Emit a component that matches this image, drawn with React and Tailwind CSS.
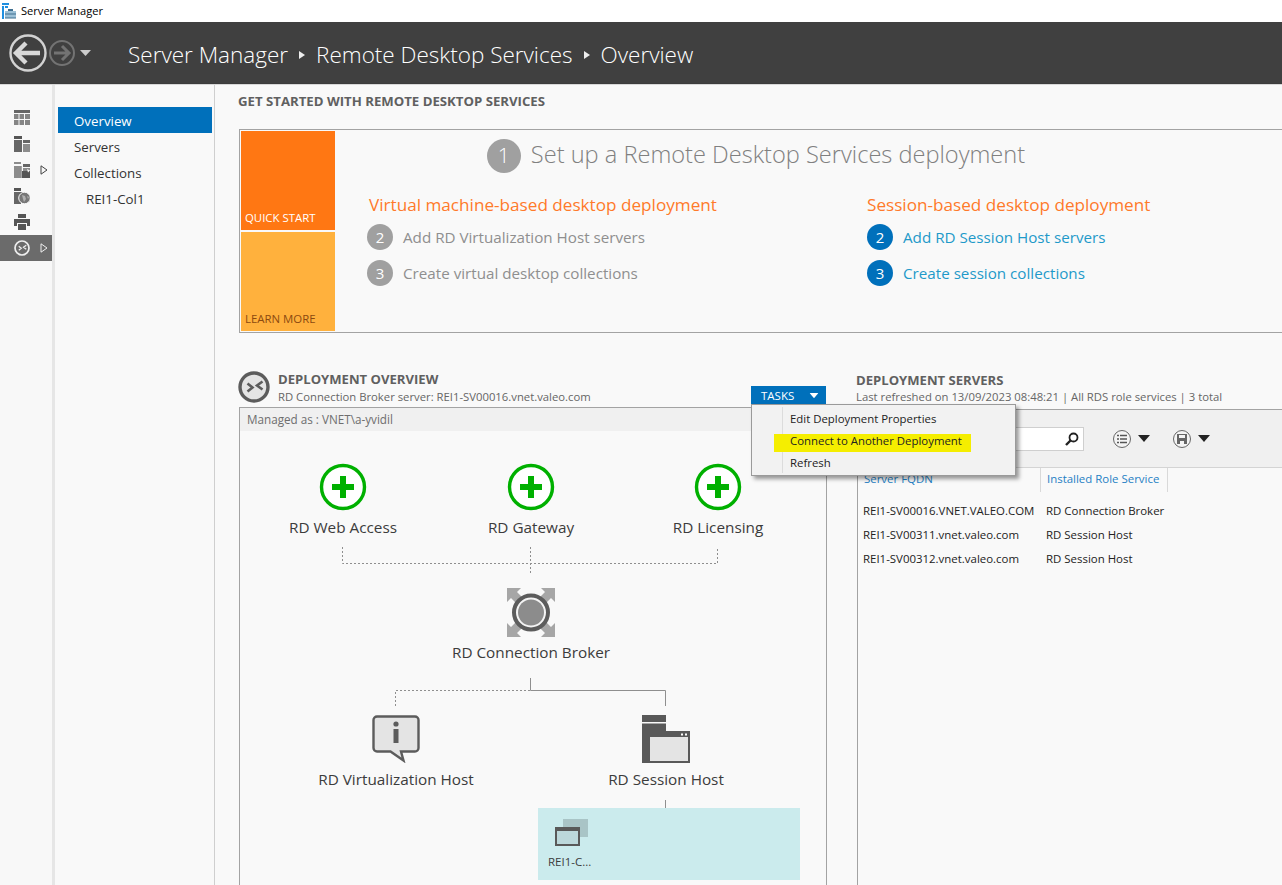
import React from "react";

const font = "[font-family:'Open_Sans','Noto_Sans',sans-serif]";

const Caret = ({ className = "" }) => (
  <svg width="12" height="7" viewBox="0 0 12 7" className={className}>
    <path d="M0 0h12L6 7z" fill="currentColor" />
  </svg>
);

const RailArrow = ({ light }) => (
  <svg width="8" height="10" viewBox="0 0 8 10" className="absolute left-[40px] top-[8px]">
    <path d="M1 .8 7 5 1 9.2z" fill="none" stroke={light ? "#eeeeee" : "#444444"} strokeWidth="1" />
  </svg>
);

const RailIcons = [
  <g key="a">
    <path d="M0 0h16v3H0z" fill="#666666" />
    <path d="M0 4h4.500v5H0zM5.500 4h4.500v5H5.500zM11 4h5v5h-5zM0 10h4.500v5H0zM5.500 10h4.500v5H5.500zM11 10h5v5h-5z" fill="#858585" />
  </g>,
  <g key="b">
    <path d="M0 0h8v3H0z" fill="#555555" />
    <path d="M0 4h8v12H0z" fill="#666666" />
    <path d="M9 4h7v3H9z" fill="#666666" />
    <path d="M9 8h7v8H9z" fill="#8c8c8c" />
  </g>,
  <g key="c">
    <path d="M0 0h7v2H0zM0 4h7v12H0z" fill="#8c8c8c" />
    <path d="M7 4h1v12H7z" fill="#a5a5a5" />
    <path d="M9 2h7v3H9z" fill="#666666" />
    <path d="M8 9h8v7H8z" fill="#555555" />
    <path d="M9 6h7v3H9z" fill="#8c8c8c" />
    <path d="M13 7l3 1.500-2 2z" fill="#f8f8f8" />
  </g>,
  <g key="d">
    <path d="M0 0h7v3H0z" fill="#555555" />
    <path d="M0 4h7v12H0zM7 4h3v2H7z" fill="#666666" />
    <circle cx="10.500" cy="10" r="5.800" fill="#777777" stroke="#f8f8f8" />
    <path d="M8 7l3 1 1 3-2 3-1-3zM13 8l2 1-1 2z" fill="#b0b0b0" />
  </g>,
  <path key="e" d="M4 0h8v4H4zM0 5h16v7h-3V9H3v3H0zM4 10h8v6H4z" fill="#555555" />,
];

const BrokerGlyph = ({ size, ring, bg, line }) => (
  <svg width={size} height={size} viewBox="0 0 32 32">
    <circle cx="16" cy="16" r="14" fill={bg} stroke={ring} strokeWidth="3.400" />
    <path d="M9.500 12.500l5 4-5 4M24.500 10.500l-5.500 4 5.500 4" fill="none" stroke={line} strokeWidth="2.600" />
  </svg>
);

const Plus = () => (
  <svg width="48" height="48" viewBox="0 0 48 48">
    <circle cx="24" cy="24" r="21.500" fill="#ffffff" stroke="#00b000" strokeWidth="3.400" />
    <path d="M21 13h6v8h8v6h-8v8h-6v-8h-8v-6h8z" fill="#00b000" />
  </svg>
);

const Step = ({ n, text, blue }) => (
  <div className="flex items-center h-[36px]">
    <div className={`w-[26px] h-[26px] rounded-full flex items-center justify-center text-white text-[15px] ${blue ? "bg-[#0070bb]" : "bg-[#a0a0a0]"}`}>{n}</div>
    <span className={`ml-[10px] text-[15.200px] ${blue ? "text-[#1f9ac9]" : "text-[#8f8f8f]"}`}>{text}</span>
  </div>
);

const Node = ({ x, y, label, gap = 6, children }) => (
  <div className="absolute w-[200px] flex flex-col items-center" style={{ left: x - 100, top: y }}>
    <div className="h-[48px]">{children}</div>
    <div className="text-[15.300px] leading-[20px] text-[#3c3c3c] whitespace-nowrap" style={{ marginTop: gap }}>{label}</div>
  </div>
);

const rows = [
  ["REI1-SV00016.VNET.VALEO.COM", "RD Connection Broker"],
  ["REI1-SV00311.vnet.valeo.com", "RD Session Host"],
  ["REI1-SV00312.vnet.valeo.com", "RD Session Host"],
];

export default function App() {
  return (
    <div className={`w-[1282px] h-[885px] overflow-hidden flex flex-col bg-[#f9f9f9] ${font}`}>
      {/* window title */}
      <div className="h-[22px] bg-white flex items-center pl-[2px] shrink-0">
        <svg width="14" height="16" viewBox="0 0 14 16">
          <path d="M0 0h7v2H0zM0 3h2v13H0zM3 3h3v2H3z" fill="#1f8fe0" />
          <path d="M3 8h11v7H3z" fill="#9cc0d6" />
          <path d="M6 6h5v2H6zM3 10.500h11v1H3zM3 14.500h11v1H3z" fill="#3f6f90" />
        </svg>
        <span className="ml-[5px] text-[11.100px] text-black">Server Manager</span>
      </div>

      {/* breadcrumb bar */}
      <div className="h-[62px] bg-[#404040] flex items-center shrink-0 border-b border-[#3c3c3c]">
        <svg width="100" height="44" viewBox="0 0 100 44" className="ml-[8px]">
          <circle cx="20" cy="22" r="17.500" fill="none" stroke="#d2d2d2" strokeWidth="2.400" />
          <path d="M8 22h24M18 12 8 22l10 10" fill="none" stroke="#d8d8d8" strokeWidth="4.400" />
          <circle cx="54" cy="22" r="12" fill="none" stroke="#737373" strokeWidth="2" />
          <path d="M46 22h15M54 15l7 7-7 7" fill="none" stroke="#737373" strokeWidth="3" />
          <path d="M72 19h11l-5.500 6z" fill="#cccccc" />
        </svg>
        <div className="ml-[20px] pt-[5px] flex items-center text-white font-light text-[22.500px] leading-[30px] whitespace-nowrap">
          <span>Server Manager</span>
          <svg width="6" height="8" viewBox="0 0 6 8" className="mx-[11px]"><path d="M0 0l6 4-6 4z" fill="#eeeeee" /></svg>
          <span>Remote Desktop Services</span>
          <svg width="6" height="8" viewBox="0 0 6 8" className="mx-[11px]"><path d="M0 0l6 4-6 4z" fill="#eeeeee" /></svg>
          <span>Overview</span>
        </div>
      </div>

      <div className="flex flex-1 min-h-0 border-t border-[#d8d8d8]">
        {/* icon rail */}
        <div className="w-[52px] shrink-0 bg-[#f8f8f8] pt-[20px] flex flex-col">
          {RailIcons.map((icon, i) => (
            <div key={i} className="relative h-[26px] flex items-center pl-[14px]">
              <svg width="16" height="16" viewBox="0 0 16 16">{icon}</svg>
              {i === 2 && <RailArrow />}
            </div>
          ))}
          <div className="relative h-[26px] flex items-center pl-[14px] bg-[#6b6b6b]">
            <BrokerGlyph size={16} ring="#eeeeee" bg="#6b6b6b" line="#eeeeee" />
            <RailArrow light />
          </div>
        </div>
        <div className="w-[3px] shrink-0 bg-[#e6e6e6]" />

        {/* nav */}
        <div className="w-[160px] shrink-0 bg-[#f9f9f9] border-r border-[#cfcfcf] pt-[22px] pl-[3px] pr-[2px] text-[13.300px] text-[#333333]">
          <div className="h-[26px] pt-[4px] bg-[#0070bb] text-white flex items-center pl-[16px]">Overview</div>
          <div className="h-[26px] pt-[4px] flex items-center pl-[16px]">Servers</div>
          <div className="h-[26px] pt-[4px] flex items-center pl-[16px]">Collections</div>
          <div className="h-[26px] pt-[4px] flex items-center pl-[28px]">REI1-Col1</div>
        </div>

        {/* main */}
        <div className="flex-1 min-w-0 pl-[23px]">
          <div className="h-[44px] pt-[7px] text-[13.200px] leading-[18px] font-bold text-[#606060] whitespace-nowrap">GET STARTED WITH REMOTE DESKTOP SERVICES</div>

          <div className="ml-[1px] w-[1100px] h-[204px] border border-[#a3a3a3] flex p-px">
            <div className="w-[94px] flex flex-col gap-[2px] text-[11.400px]">
              <div className="flex-1 bg-[#ff7713] text-white flex items-end pl-[4px] pb-[4px]">QUICK START</div>
              <div className="flex-1 bg-[#ffb13d] text-[#8c4a10] flex items-end pl-[4px] pb-[4px]">LEARN MORE</div>
            </div>
            <div className="w-[842px]">
              <div className="flex justify-center items-center h-[46px] mt-[1px]">
                <div className="w-[34px] h-[34px] mt-[1px] rounded-full bg-[#a0a0a0] text-white flex items-center justify-center text-[21px] font-light">1</div>
                <span className="ml-[10px] text-[23.600px] font-light text-[#808080] whitespace-nowrap">Set up a Remote Desktop Services deployment</span>
              </div>
              <div className="flex mt-[15px] whitespace-nowrap">
                <div className="w-[532px] pl-[32px]">
                  <div className="pl-[2px] text-[17.150px] leading-[24px] text-[#ff7a2a]">Virtual machine-based desktop deployment</div>
                  <div className="mt-[2px]">
                    <Step n="2" text="Add RD Virtualization Host servers" />
                    <Step n="3" text="Create virtual desktop collections" />
                  </div>
                </div>
                <div>
                  <div className="text-[17.150px] leading-[24px] text-[#ff7a2a]">Session-based desktop deployment</div>
                  <div className="mt-[2px]">
                    <Step n="2" text="Add RD Session Host servers" blue />
                    <Step n="3" text="Create session collections" blue />
                  </div>
                </div>
              </div>
            </div>
          </div>

          {/* lower row */}
          <div className="relative flex mt-[37px] ml-[1px] w-[1100px]">
            <div className="w-[588px] shrink-0">
              <div className="h-[37px] flex items-start relative">
                <div className="mt-[1px] -ml-[1px]"><BrokerGlyph size={32} ring="#5c5c5c" bg="#e4e4e4" line="#5c5c5c" /></div>
                <div className="ml-[8px]">
                  <div className="mt-[1px] text-[13.100px] leading-[16px] font-bold text-[#606060]">DEPLOYMENT OVERVIEW</div>
                  <div className="mt-[2px] text-[11.300px] leading-[16px] text-[#666666]">RD Connection Broker server: REI1-SV00016.vnet.valeo.com</div>
                </div>
                <div className="absolute left-[512px] top-[16px] w-[75px] h-[19px] bg-[#0070bb] text-white text-[11.500px] flex items-center pl-[10px]">
                  TASKS
                  <Caret className="ml-[14px] scale-75" />
                </div>
              </div>

              <div className="relative h-[500px] border border-[#a3a3a3] bg-[#f9f9f9]">
                <div className="h-[23px] bg-[#f0f0f0] text-[11.700px] text-[#6e6e6e] flex items-center pl-[7px]">{"Managed as : VNET\\a-yvidil"}</div>

                {/* connectors */}
                <svg width="586" height="480" className="absolute left-0 top-0" fill="none">
                  <g stroke="#8f8f8f" strokeDasharray="2 2">
                    <path d="M102.500 139V155.500H477.500V139" />
                    <path d="M290.500 139V167" />
                    <path d="M155.500 298V282.500H290" />
                  </g>
                  <g stroke="#8f8f8f">
                    <path d="M290.500 270V282.500H425.500V298" />
                    <path d="M425.500 392V400" />
                  </g>
                </svg>

                <Node x={103} y={55} label="RD Web Access"><Plus /></Node>
                <Node x={291} y={55} label="RD Gateway"><Plus /></Node>
                <Node x={478} y={55} label="RD Licensing"><Plus /></Node>

                <Node x={291} y={180} label="RD Connection Broker">
                  <svg width="48" height="49" viewBox="0 0 48 49">
                    <path d="M0 0h14l-4 4 7 7-6 6-7-7-4 4zM48 0H34l4 4-7 7 6 6 7-7 4 4zM0 49V35l4 4 7-7 6 6-7 7 4 4zM48 49H34l4-4-7-7 6-6 7 7 4-4z" fill="#a6a6a6" />
                    <circle cx="24" cy="24.500" r="17" fill="#f4f4f4" stroke="#5c5c5c" strokeWidth="4" />
                    <circle cx="24" cy="24.500" r="13" fill="#8c8c8c" />
                  </svg>
                </Node>

                <Node x={156} y={307} label="RD Virtualization Host">
                  <svg width="48" height="48" viewBox="0 0 48 48">
                    <path d="M5 1.500h38a3.500 3.500 0 0 1 3.500 3.500v28a3.500 3.500 0 0 1-3.500 3.500H29l2.500 9-13-9H5A3.500 3.500 0 0 1 1.500 33V5A3.500 3.500 0 0 1 5 1.500z" fill="#e4e4e4" stroke="#5c5c5c" strokeWidth="2.400" />
                    <circle cx="24" cy="9" r="2.600" fill="#5c5c5c" />
                    <path d="M21.500 14h5v14h-5z" fill="#5c5c5c" />
                  </svg>
                </Node>

                <Node x={426} y={306} gap={7} label="RD Session Host">
                  <svg width="48" height="49" viewBox="0 0 48 49">
                    <path d="M0 1h24v16H8v32H0z" fill="#595959" />
                    <path d="M0 8h24v1.500H0z" fill="#f9f9f9" />
                    <path d="M7 18h40v30H7z" fill="#e4e4e4" stroke="#595959" strokeWidth="2" />
                    <path d="M7 18h40v5H7z" fill="#595959" />
                    <path d="M39 19.500h2v2h-2zM43 19.500h2v2h-2z" fill="#ffffff" />
                  </svg>
                </Node>

                {/* collections band */}
                <div className="absolute left-[298px] top-[400px] w-[262px] h-[72px] bg-[#cbebed] pl-[10px] pt-[11px]">
                  <svg width="33" height="27" viewBox="0 0 33 27" className="ml-[7px]">
                    <path d="M8 0h25v18H8z" fill="#a9c4c6" />
                    <path d="M1 9h23v17H1z" fill="#bcd8db" stroke="#595959" strokeWidth="2" />
                    <path d="M1 9h23v3H1z" fill="#595959" />
                  </svg>
                  <div className="mt-[9px] text-[11.500px] leading-[14px] text-[#3c3c3c]">REI1-C...</div>
                </div>
              </div>
            </div>

            {/* deployment servers */}
            <div className="ml-[29px] flex-1">
              <div className="h-[37px]">
                <div className="mt-[2px] text-[13.100px] leading-[16px] font-bold text-[#606060]">DEPLOYMENT SERVERS</div>
                <div className="mt-[1px] text-[11.300px] leading-[16px] text-[#666666] whitespace-nowrap">Last refreshed on 13/09/2023 08:48:21 | All RDS role services  | 3 total</div>
              </div>
              <div className="border-t border-l border-[#a3a3a3] ml-px h-[500px] text-[11.450px] text-[#222222]">
                <div className="h-[58px] bg-[#f0f0f0] border-b border-[#d4d4d4] flex items-center">
                  <div className="ml-[100px] w-[126px] h-[24px] bg-white border border-[#cfcfcf] flex items-center justify-end pr-[3px]">
                    <svg width="16" height="16" viewBox="0 0 16 16" fill="none">
                      <circle cx="9.500" cy="6.500" r="4" stroke="#222222" strokeWidth="1.800" />
                      <path d="M6.500 9.500 2 14" stroke="#222222" strokeWidth="2.400" />
                    </svg>
                  </div>
                  <svg width="20" height="20" viewBox="0 0 20 20" fill="none" className="ml-[28px]">
                    <circle cx="10" cy="10" r="8.500" fill="#f4f4f4" stroke="#666666" />
                    <path d="M5 6.500h2M8 6.500h7M5 10h2M8 10h7M5 13.500h2M8 13.500h7" stroke="#555555" strokeWidth="1.500" />
                  </svg>
                  <Caret className="ml-[6px] text-[#222222]" />
                  <svg width="20" height="20" viewBox="0 0 20 20" fill="none" className="ml-[22px]">
                    <circle cx="10" cy="10" r="8.500" fill="#f4f4f4" stroke="#666666" />
                    <path fillRule="evenodd" d="M5 5h10v10H5zM7 6v3h6V6zM8 12v3h4v-3z" fill="#666666" />
                  </svg>
                  <Caret className="ml-[6px] text-[#222222]" />
                </div>
                <div className="flex h-[24px] text-[#1f7fc4] relative">
                  <div className="w-[183px] border-r border-[#d9d9d9] pl-[6px] leading-[22px]">Server FQDN</div>
                  <div className="w-[127px] border-r border-[#d9d9d9] pl-[6px] leading-[22px]">Installed Role Service</div>
                </div>
                <div className="pt-[7px]">
                  {rows.map(([fqdn, role]) => (
                    <div key={fqdn} className="flex h-[24px] items-center whitespace-nowrap">
                      <div className="w-[183px] pl-[5px]">{fqdn}</div>
                      <div className="pl-[5px]">{role}</div>
                    </div>
                  ))}
                </div>
              </div>
            </div>

            {/* tasks menu */}
            <div className="absolute left-[512px] top-[34px] w-[265px] h-[72px] bg-[#f2f2f2] border border-[#9a9a9a] shadow-[3px_3px_4px_rgba(0,0,0,0.4)] text-[11.400px] text-[#222222]">
              <div className="absolute left-[30px] top-[2px] bottom-[2px] w-px bg-[#dcdcdc]" />
              <div className="absolute left-[22px] top-[29px] w-[197px] h-[18px] bg-[#f5ee00]" />
              <div className="relative h-[22px] mt-[3px] flex items-center pl-[38px]">Edit Deployment Properties</div>
              <div className="relative h-[22px] flex items-center pl-[38px]">Connect to Another Deployment</div>
              <div className="relative h-[22px] flex items-center pl-[38px]">Refresh</div>
            </div>
          </div>
        </div>
      </div>
    </div>
  );
}
